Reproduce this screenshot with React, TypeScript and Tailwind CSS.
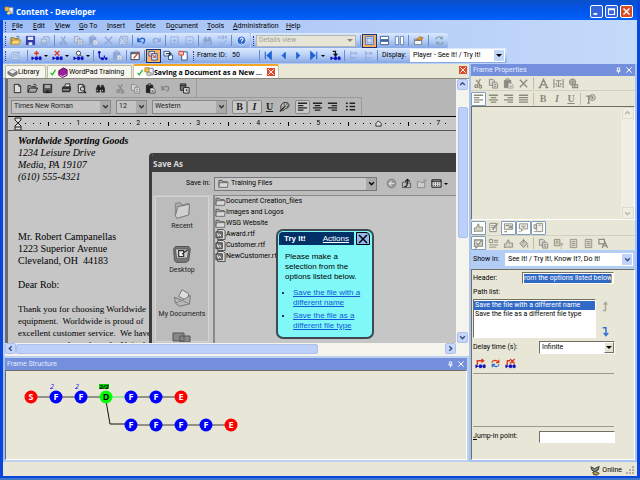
import type { ReactNode } from "react";
import clsx from "clsx";

const doc = (
  <path d="M2.5 1.5h5l2 2v7h-7z M7.5 1.5v2h2" fill="#ddd" stroke="currentColor" />
);
const nodes = (
  <>
    <path d="M1 9h10" stroke="#1212c0" />
    <path d="M1 7.5l2 1.500-2 1.500z M5 7.500h2v3H5z M9 7.500h2v3H9z" fill="#1212c0" stroke="#1212c0" />
  </>
);

// 12x12 toolbar glyphs
const glyphs: Record<string, ReactNode> = {
  open: (
    <>
      <path d="M1 10V3h3l1 1h4v2" fill="#e8b64c" stroke="#8c6a1c" />
      <path d="M1 10l2-4.500h8.500L9.500 10z" fill="#ffd978" stroke="#b5892c" />
      <path d="M7 2c2-1.500 3 0 3 1.500" stroke="#2855b8" />
    </>
  ),
  openMono: (
    <>
      <path d="M1 10V3h3l1 1h4v2 M1 10l2-4.500h8.500L9.500 10z" fill="#aaa" stroke="#222" />
      <path d="M7 2c2-1.500 3 0 3 1.500" stroke="#222" />
    </>
  ),
  save: (
    <>
      <path d="M1.500 1.500h9v9h-9z" fill="currentColor" stroke="currentColor" />
      <path d="M3 2h6v3.500H3z M4 8h4v3H4z" fill="#dfe6f5" />
    </>
  ),
  saveMono: (
    <>
      <path d="M1.500 1.500h9v9h-9z" fill="#555" stroke="#222" />
      <path d="M3 2h6v3.500H3z" fill="#aaa" />
      <path d="M4 8h4v3H4z" fill="#222" />
    </>
  ),
  saveAll: <path d="M1.500 4.500h6v6h-6z M4 4V2h6v6H8 M3 8h3v2H3z" fill="#c9d6ee" stroke="currentColor" />,
  cut: (
    <>
      <path d="M8 1L5 7.500 M3.500 2L8 8" stroke="currentColor" strokeWidth="1.300" />
      <circle cx="3.500" cy="9" r="1.500" stroke="currentColor" strokeWidth="1.300" />
      <circle cx="8" cy="9.500" r="1.500" stroke="currentColor" strokeWidth="1.300" />
    </>
  ),
  copy: (
    <>
      <path d="M1.500 1.500h4l1.500 1.500v5H1.500z" fill="#d8d8d8" stroke="currentColor" />
      <path d="M5 4.500h4l1.500 1.500v5H5z M6.500 7h2.500 M6.500 9h2.500" fill="#d8d8d8" stroke="currentColor" />
    </>
  ),
  paste: (
    <>
      <path d="M1.500 2.500h7v8h-7z" fill="currentColor" stroke="currentColor" />
      <path d="M3.500 1h3v2h-3z" fill="#ddd" stroke="currentColor" />
      <path d="M5.500 5.500h3.500l2 2v3.500h-5.500z M7 8h2 M7 9.500h3" fill="#e8e8e8" stroke="currentColor" strokeWidth=".7" />
    </>
  ),
  x: <path d="M2 2l8 8 M10 2L2 10" stroke="currentColor" strokeWidth="1.500" />,
  snapshot: (
    <>
      <path d="M1.500 3.500h7v7h-7z M3 3V1.500h7.500v7H9" fill="#d5e0f4" stroke="currentColor" />
      <circle cx="5" cy="7" r="2" stroke="currentColor" />
    </>
  ),
  undo: <path d="M2 3v4h4 M2.500 6.500C5 2.500 9.500 3 9.500 6c0 1.500-1 2.500-2.500 3" stroke="currentColor" strokeWidth="1.600" />,
  redo: <path d="M10 3v4H6 M9.500 6.500C7 2.500 2.500 3 2.500 6c0 1.500 1 2.500 2.500 3" stroke="currentColor" strokeWidth="1.400" />,
  expand: <path d="M2 2h8v8H2z M4 6h4 M6 4v4" stroke="currentColor" strokeWidth=".8" />,
  collapse: <path d="M2 2h8v8H2z M4 6h4" stroke="currentColor" strokeWidth=".8" />,
  find: (
    <>
      <path d="M1.500 10V6l1.500-3.500h2V10z M10.500 10V6L9 2.500H7V10z M5 5h2v2H5z" fill="currentColor" stroke="currentColor" strokeWidth=".6" />
      <path d="M2.500 7.500v1.500 M8.200 7.500v1.500" stroke="#eee" strokeWidth=".8" />
    </>
  ),
  spell: <path d="M1 4l1.500-3L4 4 M5.500 1v3h1.500l.5-1-.5-2z M11 1.500H9v2h2 M2 7.500L5 10.500 10.500 5.500" stroke="currentColor" />,
  help: (
    <>
      <circle cx="6" cy="6" r="4.800" fill="#2c68d0" stroke="#e6efff" />
      <path d="M4.500 4.800C4.500 2.600 8 3 7.600 5 7.400 6 6 6 6 7.200 M6 8.400v1" stroke="#fff" strokeWidth="1.200" />
    </>
  ),
  viewSingle: (
    <>
      <path d="M1.500 1.500h9v9h-9z" fill="#fff" stroke="#4268ad" />
      <path d="M3 3h6v6H3z M1.500 4h9 M4 1.500v9 M8 1.500v9 M1.500 8h9" fill="#d7e4fb" stroke="#83a3d9" strokeWidth=".7" />
    </>
  ),
  viewRows: <path d="M1.500 1.500h9v3.500h-9z M1.500 7h9v3.500h-9z M1 6h10" fill="#fff" stroke="#3c5c96" />,
  viewCols: <path d="M1.500 1.500H5v9H1.500z M7 1.500h3.500v9H7z" fill="#fff" stroke="#647fae" />,
  options: (
    <>
      <path d="M1.500 4.500h8v6h-8z M1.500 6h8" fill="#f7f7f0" stroke="#6c7890" />
      <path d="M4 5l3-3 4 1-3 3z" fill="#e79b2e" stroke="#9b5b10" strokeWidth=".7" />
    </>
  ),
  refresh: <path d="M2 5c0-3 5-4 7-1.500V1.500 M9 4H6.500 M10 7c0 3-5 4-7 1.500v2 M3 8h2.500" stroke="currentColor" strokeWidth="1.300" />,
  at: (
    <>
      <circle cx="5.500" cy="6.500" r="4.300" fill="#cfdaef" stroke="currentColor" />
      <path d="M4 5h3v3H4z M8 2l3 1" stroke="currentColor" />
    </>
  ),
  nodeAdd: (
    <>
      <path d="M6 1v5 M3.500 3.500h5" stroke="#e03820" strokeWidth="1.700" />
      {nodes}
    </>
  ),
  nodeDelete: (
    <>
      <path d="M3 1l5 5 M8 1L3 6" stroke="#e03820" strokeWidth="1.400" />
      {nodes}
    </>
  ),
  nodeFind: (
    <>
      <circle cx="6" cy="3.500" r="2.300" fill="#fff" stroke="#333" />
      <path d="M7.500 5l2 2" stroke="#333" />
      {nodes}
    </>
  ),
  nodeLink: (
    <>
      <path d="M2.500 3v4c0 2 2 2.500 4 2 M8 6v3" stroke="#1212c0" strokeWidth="1.300" />
      <circle cx="2.500" cy="2.500" r="1.500" fill="#1212c0" />
      <circle cx="6" cy="9.500" r="1.700" fill="#1212c0" />
      <circle cx="10" cy="9.500" r="1.500" fill="#1212c0" />
    </>
  ),
  nodeJump: (
    <>
      <path d="M3 1.500h3v4 M4 4l2 2.500L8 4" stroke="#111" strokeWidth="1.300" />
      {nodes}
    </>
  ),
  edit: (
    <>
      <path d="M1 2.500h9v8H1z M1 4h9" fill="#fff" stroke="#27374f" />
      <path d="M4 9l6-7" stroke="#c4571a" strokeWidth="1.500" />
    </>
  ),
  frameA: (
    <>
      <path d="M1 1.500h6v5H1z" fill="#fff" stroke="#274b93" />
      <path d="M4 4h6v7H4z" fill="#d8e6ff" stroke="#274b93" />
      <path d="M2 3l6 5 M8 5.500V8H5.500" stroke="#d8402a" />
    </>
  ),
  frameB: (
    <>
      <path d="M1 1.500h6v5H1z M6 5.500h4.500v5H6z" fill="#fff" stroke="#274b93" />
      <path d="M3 4h5 M7 2.500L9 4 7 5.500" stroke="#111" />
    </>
  ),
  frameC: (
    <>
      <path d="M4 2h6v9H4z" fill="#fff" stroke="#274b93" />
      <path d="M1 1.500h5v4H1z" fill="#f6c8bc" stroke="#d8402a" />
    </>
  ),
  first: <path d="M2.500 2v8 M9 2v8L4.500 6z" fill="#1d64d8" stroke="#1d64d8" strokeWidth="1.200" />,
  prev: <path d="M8 2.500v7L4.500 6z" fill="#1d64d8" stroke="#1d64d8" />,
  next: <path d="M4 2.500v7L7.500 6z" fill="#1d64d8" stroke="#1d64d8" />,
  last: <path d="M9.500 2v8 M3 2v8L7.500 6z" fill="#1d64d8" stroke="#1d64d8" strokeWidth="1.200" />,
  tree: <path d="M3 1v10 M3 3.500h6 M3 8.500h6 M8 2l2 1.500L8 5" stroke="currentColor" />,
  new: doc,
  print: (
    <>
      <path d="M4 4l1-3h5L9 4" fill="#eee" stroke="#222" />
      <path d="M1 5l1.500-1.500H11v4L9.500 10H1z" fill="#333" />
      <path d="M2 7.500h7" stroke="#ccc" />
    </>
  ),
  preview: (
    <>
      {doc}
      <circle cx="7" cy="6.500" r="2.300" fill="#ccc" stroke="#222" />
      <path d="M8.500 8.500L11 11" stroke="#222" strokeWidth="1.400" />
    </>
  ),
  date: (
    <>
      <path d="M1.500 1h6v7h-6z M1.500 3h6" fill="#777" stroke="#222" />
      <path d="M5 5h6v6H5z" fill="#ddd" stroke="#222" />
      <path d="M8 6.500v2h1.500" stroke="#222" />
    </>
  ),
  alignLeft: <path d="M1 2.500h10 M1 5h6 M1 7.500h10 M1 10h6" stroke="currentColor" strokeWidth="1.500" />,
  alignCenter: <path d="M1 2.500h10 M3 5h6 M1 7.500h10 M3 10h6" stroke="currentColor" strokeWidth="1.500" />,
  alignRight: <path d="M1 2.500h10 M5 5h6 M1 7.500h10 M5 10h6" stroke="currentColor" strokeWidth="1.500" />,
  justify: <path d="M1 2.500h10 M1 5h10 M1 7.500h10 M1 10h10" stroke="currentColor" strokeWidth="1.500" />,
  bullets: <path d="M1 2.500h2 M5 2.500h6 M1 6h2 M5 6h6 M1 9.500h2 M5 9.500h6" stroke="currentColor" strokeWidth="1.600" />,
  palette: (
    <>
      <path d="M4 10.500C0 9 2 1.500 7 1.500c5 0 5 6 1 6.500-2 0-1 1.500-4 2.500z" fill="#bbb" stroke="currentColor" />
      <path d="M1 11.500L7 5 M5 3.500h1 M8 3.500h1 M8.500 6h1" stroke="currentColor" strokeWidth="1.400" />
    </>
  ),
  back: (
    <>
      <circle cx="6" cy="6" r="4.800" fill="#999" stroke="#777" strokeWidth=".8" />
      <path d="M9 6H4 M6 3.500L3.500 6 6 8.500" stroke="#ddd" strokeWidth="1.300" />
    </>
  ),
  up: (
    <>
      <path d="M1.500 10.500v-6h3l1 1h5v5z" fill="#bbb" stroke="#555" />
      <path d="M3.500 9.500c3 0 3.500-1 3.500-7 M4.500 4L7 1.500 9.500 4" stroke="#222" strokeWidth="1.400" />
    </>
  ),
  newFolder: (
    <>
      <path d="M1.500 10.500V4h3l1 1h4v5.500z" fill="#ccc" stroke="#888" />
      <path d="M9.500 1v4 M7.500 3h4 M8 1.500l3 3 M11 1.500l-3 3" stroke="#999" strokeWidth=".8" />
    </>
  ),
  folder: (
    <>
      <path d="M1 10V2.500h3.500L5.500 4H10v1.500" fill="#a5a5a5" stroke="#444" strokeWidth=".8" />
      <path d="M1 10.200l.5-5 9.500-.2-.6 5.200z" fill="#d8d8d8" stroke="#555" strokeWidth=".8" />
    </>
  ),
  bigFolder: (
    <>
      <path d="M2 9.500V2l3-.5 1 1.500 4-1v6.500z" fill="#aaa" stroke="#888" strokeWidth=".6" />
      <path d="M2 9.500L3.500 4l7-1.500L10 9l-7 2z" fill="#d0d0d0" stroke="#777" strokeWidth=".6" />
    </>
  ),
  desktop: (
    <>
      <path d="M1 3l1-1.500h8L11 3l-1 7-1.500 1h-6L1.500 10z" fill="#777" stroke="#555" strokeWidth=".6" />
      <path d="M2 3h8l-.8 5.500H2.800z" fill="#ccc" stroke="#555" strokeWidth=".5" />
      <path d="M4 4h3v3.500H4z M6 6l3.500-2.500" fill="#eee" stroke="#333" strokeWidth=".7" />
    </>
  ),
  documents: (
    <>
      <path d="M4 5L6 1l4 2.500L9.500 8z" fill="#ddd" stroke="#777" strokeWidth=".6" />
      <path d="M1.500 5.500L6 7.500l5-3-.5 5-6 1.500-2.500-2z" fill="#b8b8b8" stroke="#777" strokeWidth=".6" />
      <path d="M2 9l4-1.500 4.500 2" stroke="#888" strokeWidth=".6" />
    </>
  ),
  views: <path d="M1 2h10v8H1z M1 3.500h10 M3 5.500h1 M5.500 5.500h1 M8 5.500h1 M3 8h1 M5.500 8h1 M8 8h1" fill="#ddd" stroke="currentColor" />,
  rtf: (
    <>
      <path d="M3 .5h6l2 2v9H3z" fill="#ddd" stroke="#444" />
      <path d="M1 3h7v6.500H1z" fill="#777" stroke="#444" />
      <path d="M2.500 4.500l1 3.500 1.500-2.500L6.500 8" stroke="#eee" />
    </>
  ),
  text: (
    <path d="M2 10.500L6 1.500l4 9 M3.500 7.500h5 M.5 10.500h3 M8 10.500h3.500" stroke="currentColor" strokeWidth="1.500" />
  ),
  spacing: <path d="M1 1v10 M11 1v10 M3 3h6 M6 3v6 M3 9h6 M3.500 5.500v2 M8.500 5.500v2" stroke="currentColor" strokeWidth="1.200" />,
  link: (
    <>
      <circle cx="5" cy="4.500" r="3.500" fill="#b5b3a5" stroke="currentColor" />
      <path d="M2 4.500h6 M5 1v7" stroke="#8c8a7c" strokeWidth=".6" />
      <path d="M5 7.500h5.500v3H5z M7.500 8v2" fill="#ddd" stroke="currentColor" strokeWidth="1.200" />
    </>
  ),
  textObj: (
    <>
      <circle cx="8" cy="5" r="3.300" fill="#d2d0c2" stroke="currentColor" />
      <path d="M1 3.500h6 M4 3.500V11 M2.500 11h3 M7 5h2 M8 3.500v3" stroke="currentColor" strokeWidth="1.400" />
    </>
  ),
  hand: <path d="M1.500 10.500v-4h2l2-4.500 1 .5v3h4v4.500h-7z" fill="#d6d3c2" stroke="currentColor" />,
  note: (
    <>
      <path d="M2 1.500h7v9H2z M3.500 4h4 M3.500 6h3" fill="#eee" stroke="currentColor" />
      <path d="M5 8.500l5.500-7" stroke="currentColor" strokeWidth="1.600" />
    </>
  ),
  picture: (
    <>
      <path d="M1.500 2h9v6h-9z" fill="#eee" stroke="currentColor" />
      <path d="M3 4h4 M6.500 7l2-2.500L10 7 M1.500 10.500h3" stroke="currentColor" strokeWidth="1.400" />
    </>
  ),
  callout: (
    <>
      <path d="M1.500 2h9v5.500H6L4 10V7.500H1.500z" fill="#eee" stroke="currentColor" />
      <path d="M3.500 4.500h5 M5 6h2 M1 10.500h2" stroke="currentColor" />
    </>
  ),
  sheet: <path d="M3.500 1.500h7v9h-7z M1 3h3v4H1z M6 3.500h3 M1 10.500h2" fill="#eee" stroke="currentColor" />,
  checkNote: <path d="M1.500 2h9v7h-5L3 11V9H1.500z M3.500 5l2 2.500L9.500 2" fill="#ccc" stroke="currentColor" strokeWidth="1.200" />,
  outline: <path d="M1.500 1.500H5V5H1.500z M6.500 2.500H11 M6.500 4.500H11 M1.500 7.500H11 M1.500 10H9" stroke="currentColor" />,
  bucket: <path d="M2 6l4-4 4.500 4L6 10.500z M6 5V1 M10.500 7.500v3" fill="#c8c5b4" stroke="currentColor" />,
  page: <path d="M2.500 1.500h7v9h-7z M4 4h4 M4 6h4 M4 8h4" fill="#ddd9c8" stroke="currentColor" strokeWidth=".9" />,
  pageQuery: <path d="M1.500 1.500h6v7h-6z M3 3.500h3 M3 5.500h3 M8 7c0-1.500 3-1.500 2.500 0L9 8.500v.8 M9 10.500v1" fill="#ddd9c8" stroke="currentColor" />,
  pageText: <path d="M1 1.500h6v5H1z M4.500 11l3-7 3 7 M5.500 8.500h4" stroke="currentColor" strokeWidth="1.300" />,
  moveUp: <path d="M3 10.500h3V2 M4 4l2-2.500L8 4" stroke="#a8a698" strokeWidth="1.600" />,
  moveDown: <path d="M3 2h3.500v7.500 M4 7.500l2.500 3 2.500-3" stroke="#2f6fd8" strokeWidth="1.600" />,
  pathAdd: (
    <>
      <path d="M2.500 8V3h6 M7 1l2.500 2L7 5" stroke="#e03820" strokeWidth="1.500" />
      {nodes}
    </>
  ),
  pathSwap: (
    <>
      <path d="M2 5c1-3 5-3 7-.500 M9.500 2v3h-3" stroke="#e03820" strokeWidth="1.400" />
      <path d="M10 7c-1 3-5 3-7 .500 M2.500 10V7h3" stroke="#2f6fd8" strokeWidth="1.400" />
    </>
  ),
  pathDelete: (
    <>
      <path d="M2.500 8V3h3 M5.500 1l5 5 M10.500 1l-5 5" stroke="#e03820" strokeWidth="1.500" />
      {nodes}
    </>
  ),
  app: (
    <>
      <path d="M4 1.500h7v8H4z" fill="#e9f0fb" stroke="#52709e" />
      <path d="M1 1h5v5H1z" fill="#f3c14e" stroke="#8a6014" strokeWidth=".7" />
      <path d="M5 6l4 1-3 4-3-2z" fill="#f7dd8a" stroke="#52709e" strokeWidth=".7" />
    </>
  ),
  check: <path d="M1 6.500L4 10l5.500-8.500" stroke="#12b312" strokeWidth="2" />,
  library: (
    <>
      <path d="M1 5l5-2.500L11 5 6 8z" fill="#eee" stroke="#777" strokeWidth=".8" />
      <path d="M1 5v2.500L6 10.500 11 8V5L6 8z" fill="#888" stroke="#666" strokeWidth=".8" />
    </>
  ),
  book: (
    <>
      <path d="M2 4l5-3 4 2v6l-5 2.500L2 9z" fill="#a01c9c" stroke="#4a0a52" />
      <path d="M3 9l3 1.500L10.500 8" stroke="#f1d7f0" />
    </>
  ),
  pin: <path d="M4 1.500h4v5H4z M2.500 7h7 M6 7v4" stroke="currentColor" strokeWidth="1.500" />,
  online: (
    <>
      <path d="M1 2l4 2 5-2.500-1 4-4 2-3-2z" fill="#888" stroke="#333" />
      <path d="M3 8l3-1 4 2-2 2-4-.500z" fill="#c7a23a" stroke="#333" />
    </>
  ),
};

function Glyph({ name, className = "size-[11px]" }: { name: string; className?: string }) {
  return (
    <svg viewBox="0 0 12 12" fill="none" aria-hidden="true" className={clsx("shrink-0", className)}>
      {glyphs[name]}
    </svg>
  );
}

type ToolProps = { icon: string; label: string; off?: boolean; className?: string };

function Tool({ icon, label, off, className }: ToolProps) {
  return (
    <button
      type="button"
      aria-label={label}
      className={clsx("flex h-[14px] w-[15px] shrink-0 items-center justify-center", off && "text-[#8ea6d4]", className)}
    >
      <Glyph name={icon} />
    </button>
  );
}

const Sep = () => <span className="mx-px h-[11px] w-px shrink-0 bg-[#6a8ccb]" />;
const GraySep = () => <span className="mx-[2px] h-[12px] w-px shrink-0 bg-[#c0bead]" />;
const Grip = () => <span className="mx-[2px] h-[10px] shrink-0 border-l border-dotted border-[#27418c]" />;
const Caret = () => <span className="mr-[2px] shrink-0 border-x-2 border-t-2 border-x-transparent border-t-black" />;

function Chevron({ dir, className }: { dir: "up" | "down" | "left" | "right"; className?: string }) {
  const paths = { up: "M2 7l4-4 4 4", down: "M2 4l4 4 4-4", left: "M8 2L4 6l4 4", right: "M4 2l4 4-4 4" };
  return (
    <svg viewBox="0 0 12 12" fill="none" aria-hidden="true" className={clsx("size-[7px]", className)}>
      <path d={paths[dir]} stroke="currentColor" strokeWidth="2.500" />
    </svg>
  );
}

function ScrollButton({ dir }: { dir: "up" | "down" | "left" | "right" }) {
  return (
    <button
      type="button"
      aria-label={`Scroll ${dir}`}
      className="flex size-[11px] shrink-0 items-center justify-center rounded-[2px] border border-[#aebfea] bg-[#c5d5fc] text-[#3a4f80]"
    >
      <Chevron dir={dir} />
    </button>
  );
}

type ComboProps = { label: string; value: string; className?: string; arrow?: string; solid?: boolean };

function Combo({ label, value, className, arrow = "bg-[#c1d3fb] text-[#3a4f80]", solid }: ComboProps) {
  return (
    <span className={clsx("relative flex shrink-0 items-center border", className)}>
      <select aria-label={label} className="h-full w-full appearance-none bg-transparent pl-[2px] outline-none">
        <option>{value}</option>
      </select>
      <span className={clsx("pointer-events-none absolute inset-y-0 right-0 flex w-[10px] items-center justify-center", arrow)}>
        {solid ? (
          <span className="border-x-[3px] border-t-[3px] border-x-transparent border-t-current" />
        ) : (
          <Chevron dir="down" />
        )}
      </span>
    </span>
  );
}

function PaneTitle({ title }: { title: string }) {
  return (
    <div className="flex h-[12px] shrink-0 items-center gap-[3px] bg-[#7490dc] px-[2px] text-[#e4ecff]">
      <h2 className="flex-1">{title}</h2>
      <button type="button" aria-label="Pin pane" className="text-white"><Glyph name="pin" className="size-[7px]" /></button>
      <button type="button" aria-label="Close pane" className="text-white"><Glyph name="x" className="size-[8px]" /></button>
    </div>
  );
}

const bar = "flex h-[15px] items-center rounded-r-[2px] bg-linear-to-b from-[#dce9fe] via-[#b7cff7] to-[#86a7e4]";
const activeTool = "border border-[#1c2f7c] bg-[#fdb35c]";

function TitleBar() {
  const btn = "flex size-[13px] items-center justify-center rounded-[2px] border border-white text-white";
  return (
    <header className="flex h-[20px] shrink-0 items-center gap-[2px] bg-linear-to-b from-[#0a50c8] via-[#0055ea] to-[#0461f8] px-1 pt-[2px] font-['Open_Sans',sans-serif]">
      <Glyph name="app" className="size-[10px]" />
      <h1 className="flex-1 text-[8px] font-bold text-white">Content - Developer</h1>
      <button type="button" aria-label="Minimize" className={clsx(btn, "bg-[#3465dc]")}>
        <svg viewBox="0 0 12 12" className="size-[9px]"><path d="M2 8h5v2.500H2z" fill="#fff" /></svg>
      </button>
      <button type="button" aria-label="Maximize" className={clsx(btn, "bg-[#3465dc]")}>
        <svg viewBox="0 0 12 12" fill="none" className="size-[9px]"><path d="M2 2.500h8v7.500H2z M2 3.500h8" stroke="#fff" strokeWidth="1.500" /></svg>
      </button>
      <button type="button" aria-label="Close" className={clsx(btn, "bg-[#dc4a22]")}>
        <svg viewBox="0 0 12 12" className="size-[9px]"><path d="M2 2l8 8 M10 2L2 10" stroke="#fff" strokeWidth="2" /></svg>
      </button>
    </header>
  );
}

const menus = [
  ["", "F", "ile", "w-[21px]"],
  ["", "E", "dit", "w-[22px]"],
  ["", "V", "iew", "w-[24px]"],
  ["", "G", "o To", "w-[28px]"],
  ["", "I", "nsert", "w-[29px]"],
  ["", "D", "elete", "w-[30px]"],
  ["D", "o", "cument", "w-[41px]"],
  ["", "T", "ools", "w-[26px]"],
  ["", "A", "dministration", "w-[53px]"],
  ["", "H", "elp", "w-[20px]"],
];

function MainBars() {
  return (
    <div className="shrink-0 bg-linear-to-r from-[#9ebef5] via-[#b3cbf6] to-[#c4dafa]">
      <nav className="flex h-[13px] items-center">
        <Grip />
        <span className="w-[4px]" />
        {menus.map(([pre, key, rest, w]) => (
          <button key={key + rest} type="button" className={clsx("text-left whitespace-nowrap", w)}>
            {pre}<u>{key}</u>{rest}
          </button>
        ))}
      </nav>
      <div className="flex gap-px">
        <div className={bar}>
          <Grip />
          <Tool icon="open" label="Open" />
          <Tool icon="save" label="Save" className="text-[#3138a8]" />
          <Tool icon="saveAll" label="Save All" off />
          <Sep />
          <Tool icon="cut" label="Cut" off />
          <Tool icon="copy" label="Copy" off />
          <Tool icon="paste" label="Paste" off />
          <Tool icon="x" label="Delete" off />
          <Tool icon="snapshot" label="Capture" off />
          <Sep />
          <Tool icon="undo" label="Undo" className="text-[#2468d6]" />
          <Tool icon="redo" label="Redo" off />
          <Sep />
          <Tool icon="expand" label="Expand" off className="w-[13px]" />
          <Tool icon="collapse" label="Collapse" off className="w-[13px]" />
          <Sep />
          <Tool icon="find" label="Find" off />
          <Tool icon="spell" label="Spelling" off />
          <Sep />
          <Tool icon="help" label="Help" className="w-[17px]" />
        </div>
        <div className={bar}>
          <Grip />
          <Combo label="View" value="Details view" className="h-[12px] w-[100px] border-[#b5b8b8] bg-[#e6e5d8] text-[#a3a294]" arrow="text-[#8a897c]" solid />
          <span className="w-[3px]" />
          <Sep />
          <Tool icon="viewSingle" label="Single view" className={activeTool} />
          <Tool icon="viewRows" label="Split rows" />
          <Tool icon="viewCols" label="Split columns" />
          <Sep />
          <Tool icon="options" label="Options" className="w-[17px]" />
          <Sep />
          <Tool icon="refresh" label="Refresh" className="w-[18px] text-[#7ea6a8]" />
        </div>
      </div>
      <div className="flex pb-px">
        <div className={bar}>
          <Grip />
          <Tool icon="at" label="Preview" off />
          <span className="w-[3px]" />
          <Sep />
          <Tool icon="nodeAdd" label="Insert frame" className="w-[14px]" />
          <Caret />
          <Tool icon="nodeDelete" label="Delete frame" />
          <Caret />
          <Tool icon="nodeFind" label="Find frame" />
          <Caret />
          <Sep />
          <Tool icon="nodeLink" label="Link frames" />
          <Tool icon="paste" label="Paste frame" off />
          <Sep />
          <Tool icon="edit" label="Edit frame" />
          <Sep />
          <Tool icon="frameA" label="Show current frame" className={activeTool} />
          <Tool icon="frameB" label="Next path" />
          <Tool icon="frameC" label="Frame links" />
        </div>
        <div className={bar}>
          <Grip />
          <span className="w-[36px] pl-px">Frame ID:</span>
          <span className="w-[26px]">50</span>
          <Sep />
          <Tool icon="first" label="First frame" />
          <Tool icon="prev" label="Previous frame" />
          <Tool icon="next" label="Next frame" />
          <Tool icon="last" label="Last frame" />
          <Caret />
          <Tool icon="nodeJump" label="Jump to frame" className="w-[16px]" />
          <Sep />
          <Tool icon="tree" label="Previous branch" off />
          <Tool icon="tree" label="Next branch" off />
          <Sep />
          <span className="w-[31px] pl-[3px]">Display:</span>
          <Combo label="Display" value="Player - See It! / Try It!" className="mr-[2px] h-[13px] w-[95px] border-white bg-white" arrow="bg-[#c1d6f8] text-black" solid />
        </div>
      </div>
    </div>
  );
}

function Tabs() {
  return (
    <div role="tablist" className="flex h-[14px] shrink-0 items-end bg-[#e9e7d6] pl-[2px]">
      <button type="button" role="tab" className="flex h-[13px] w-[41px] items-center rounded-t-[2px] border border-b-0 border-[#bbb9a8] bg-[#f7f6ee] pl-px">
        <Glyph name="library" />Library
      </button>
      <button type="button" role="tab" className="ml-px flex h-[13px] w-[85px] items-center rounded-t-[2px] border border-b-0 border-[#bbb9a8] bg-[#f7f6ee] pl-[2px]">
        <Glyph name="check" className="size-[7px]" />
        <Glyph name="book" />
        <span className="pl-px">WordPad Training</span>
      </button>
      <div className="ml-px flex h-full w-[146px] items-center rounded-t-[2px] border border-t-2 border-b-0 border-[#c7c5b4] border-t-[#f5a524] bg-white pl-[3px]">
        <button type="button" role="tab" aria-selected="true" className="flex flex-1 items-center font-['Open_Sans',sans-serif] font-bold whitespace-nowrap">
          <Glyph name="check" className="size-[7px]" />
          <Glyph name="app" className="size-[10px]" />Saving a Document as a New ...
        </button>
        <button type="button" aria-label="Close tab" className="mr-[3px] bg-[#de4a2a] text-white"><Glyph name="x" className="size-[8px]" /></button>
      </div>
      <span className="flex-1" />
      <button type="button" aria-label="Close document" className="mr-[2px] mb-[4px] bg-[#de4a2a] text-white"><Glyph name="x" className="size-[8px]" /></button>
    </div>
  );
}

function Ruler() {
  return (
    <div className="flex h-[15px] items-center overflow-hidden border-y border-t-black border-b-[#555] bg-[#c8c8c8] pl-[6px]">
      <svg viewBox="0 0 8 14" fill="#ddd" stroke="#222" className="h-[14px] w-[8px] shrink-0">
        <path d="M1 1h6v2L4 6 1 3z M4 6l3 3v4H1V9z M1 10h6" />
      </svg>
      {[1, 2, 3, 4, 5, 6, 7].map((n) => (
        <div key={n} className="grid w-[60px] shrink-0 grid-cols-8 place-items-center">
          {[1, 2, 3, 4, 5, 6, 7].map((t) => (
            <span key={t} className={clsx("w-px bg-black", t === 4 ? "h-[4px]" : "h-px")} />
          ))}
          {n === 6 ? (
            <svg viewBox="0 0 8 8" fill="#ddd" stroke="#222" className="size-[7px]"><path d="M4 1l3 3v3H1V4z" /></svg>
          ) : (
            <span>{n}</span>
          )}
        </div>
      ))}
      <span className="ml-[3px] h-px w-px bg-black" />
    </div>
  );
}

function WordPadBars() {
  const combo = "h-[14px] border-[#888] bg-[#c4c4c4]";
  const arrow = "bg-[#aaa] text-[#333]";
  const pressed = "rounded-[2px] border border-[#888] bg-[#c8c8c8]";
  const letter = "h-[14px] w-[15px] font-['Liberation_Serif',serif] text-[10px] leading-none font-bold";
  return (
    <>
      <div className="flex h-[18px] items-center bg-[#b6b6b6] text-[#222]">
        <div className="flex h-full items-center border-r border-[#999] pr-[4px] pl-[2px]">
          <Tool icon="new" label="New document" />
          <Tool icon="openMono" label="Open document" />
          <Tool icon="saveMono" label="Save document" />
          <Tool icon="print" label="Print" className="ml-[4px]" />
          <Tool icon="preview" label="Print preview" />
          <Tool icon="find" label="Find text" className="ml-[4px]" />
          <Tool icon="cut" label="Cut text" className="ml-[5px] text-[#888]" />
          <Tool icon="copy" label="Copy text" className="text-[#888]" />
          <Tool icon="paste" label="Paste text" />
          <Tool icon="undo" label="Undo typing" className="text-[#888]" />
          <Tool icon="date" label="Date and time" className="ml-[4px]" />
        </div>
      </div>
      <div className="flex h-[18px] bg-[#b6b6b6] text-[#222]">
        <div className="flex h-full items-center border-t border-r border-[#999] pr-[3px] pl-[3px]">
          <Combo label="Font" value="Times New Roman" className={clsx(combo, "w-[100px]")} arrow={arrow} />
          <Combo label="Font size" value="12" className={clsx(combo, "mx-[5px] w-[31px]")} arrow={arrow} />
          <Combo label="Script" value="Western" className={clsx(combo, "mr-[5px] w-[75px]")} arrow={arrow} />
          <button type="button" className={clsx(pressed, letter)}>B</button>
          <button type="button" className={clsx(pressed, letter, "italic")}>I</button>
          <button type="button" className={clsx(letter, "underline")}>U</button>
          <Tool icon="palette" label="Color" />
          <Tool icon="alignLeft" label="Align left" className={clsx(pressed, "ml-[3px]")} />
          <Tool icon="alignCenter" label="Center" />
          <Tool icon="alignRight" label="Align right" />
          <Tool icon="bullets" label="Bullets" className="ml-[3px]" />
        </div>
      </div>
    </>
  );
}

const places = [
  ["Recent", "bigFolder"],
  ["Desktop", "desktop"],
  ["My Documents", "documents"],
];

const files = [
  ["Document Creation_files", "folder"],
  ["Images and Logos", "folder"],
  ["WSG Website", "folder"],
  ["Award.rtf", "rtf"],
  ["Customer.rtf", "rtf"],
  ["NewCustomer.rtf", "rtf"],
];

function SaveDialog() {
  return (
    <section className="absolute top-[22px] right-0 bottom-0 left-[141px] flex flex-col overflow-hidden rounded-tl-[4px] border-t border-l-[3px] border-[#3c3c3c] bg-[#c6c6c6]">
      <h3 className="flex h-[18px] shrink-0 items-center bg-[#3e3e3e] pl-px font-['Open_Sans',sans-serif] text-[8px] font-bold text-[#ddd]">Save As</h3>
      <div className="flex h-[23px] shrink-0 items-center bg-[#bcbcbc]">
        <span className="w-[62px] pr-[4px] text-right">Save in:</span>
        <span className="flex h-[14px] w-[163px] items-center border border-[#777] bg-[#c8c8c8] pl-[3px]">
          <Glyph name="folder" />
          <select aria-label="Save in" className="flex-1 appearance-none pl-[2px] outline-none">
            <option>Training Files</option>
          </select>
          <span className="flex h-full w-[10px] items-center justify-center bg-[#aaa]"><Chevron dir="down" /></span>
        </span>
        <Tool icon="back" label="Back" className="ml-[7px]" />
        <Tool icon="up" label="Up one level" />
        <Tool icon="newFolder" label="New folder" />
        <Tool icon="views" label="View menu" />
        <Caret />
      </div>
      <div className="flex min-h-0 flex-1 overflow-hidden">
        <div className="my-px mr-[4px] ml-[3px] flex w-[54px] shrink-0 flex-col gap-[13px] border border-[#d4d4d4] bg-[#bcbcbc] pt-[3px] text-[#222]">
          {places.map(([label, icon]) => (
            <button key={label} type="button" className="flex h-[31px] shrink-0 flex-col items-center justify-between whitespace-nowrap">
              <Glyph name={icon} className="size-[20px]" />
              <span>{label}</span>
            </button>
          ))}
          <svg viewBox="0 0 20 10" className="h-[10px] w-[20px] shrink-0 self-center" fill="#888" stroke="#555">
            <path d="M1 1h11v8H1z M8 4h10v6H8z" />
          </svg>
        </div>
        <ul className="flex-1 border-t border-l-2 border-[#888]">
          {files.map(([name, icon]) => (
            <li key={name} className="flex h-[11px] items-center">
              <Glyph name={icon} />{name}
            </li>
          ))}
        </ul>
      </div>
    </section>
  );
}

function Coach() {
  return (
    <aside className="absolute top-[98px] left-[268px] w-[98px] rounded-[7px] border-2 border-[#3b4a52] bg-[#80f8f8] pb-[6px] font-['Liberation_Sans',sans-serif] text-[8px] leading-[10px]">
      <div className="flex h-[14px] gap-[2px] pt-px pr-[2px] pl-px">
        <div className="flex flex-1 items-center justify-between rounded-tl-[4px] bg-[#003068] pr-[5px] pl-[5px] text-white">
          <b>Try It!</b>
          <a href="#actions" className="underline">Actions</a>
        </div>
        <button type="button" aria-label="Close" className="flex w-[14px] items-center justify-center rounded-tr-[4px] border border-black bg-[#94b8f0]">
          <Glyph name="x" className="size-[12px]" />
        </button>
      </div>
      <p className="mt-[7px] ml-[7px]">Please make a<br />selection from the<br />options listed below.</p>
      <ul className="mt-[6px] ml-[15px] flex list-disc flex-col gap-[3px] text-[#1058d8] marker:text-black">
        <li><a href="#name" className="underline">Save the file with a<br />different name</a></li>
        <li><a href="#type" className="underline">Save the file as a<br />different file type</a></li>
      </ul>
    </aside>
  );
}

function DocumentView() {
  return (
    <div className="flex min-h-0 flex-1 flex-col border-t border-l-2 border-t-[#8a8878] border-l-[#b8cdf0] bg-[#f4f3ec]">
      <div className="flex min-h-0 flex-1">
        <div className="flex min-w-0 flex-1 flex-col border-l-3 border-[#6c6c6c] bg-[#c6c6c6]">
          <WordPadBars />
          <div className="bg-[#b6b6b6] pt-px"><Ruler /></div>
          <div className="relative min-h-0 flex-1 overflow-hidden">
            <div className="px-[10px] pt-[4px] font-['Liberation_Serif',serif] text-[10px] leading-[12px] whitespace-pre text-black">
              <address className="pb-[48px]"><b>Worldwide Sporting Goods</b><br />1234 Leisure Drive<br />Media, PA 19107<br />(610) 555-4321</address>
              <p className="pb-[12px]">Mr. Robert Campanellas<br />1223 Superior Avenue<br />Cleveland, OH  44183</p>
              <p className="pb-[12px]">Dear Rob:</p>
              <p className="text-[9px]">Thank you for choosing Worldwide<br />equipment.  Worldwide is proud of<br />excellent customer service.  We have<br />many events throughout the United</p>
            </div>
            <SaveDialog />
            <Coach />
          </div>
        </div>
        <div className="flex w-[13px] shrink-0 flex-col items-center">
          <ScrollButton dir="up" />
          <span className="mt-[17px] h-[131px] w-[10px] rounded-[2px] border border-[#aebfea] bg-[#bdd0fa]" />
          <span className="flex-1" />
          <ScrollButton dir="down" />
        </div>
      </div>
      <div className="flex h-[13px] shrink-0 items-center pr-[13px] pb-[2px]">
        <ScrollButton dir="left" />
        <span className="h-[10px] w-[67%] rounded-[2px] border border-[#aebfea] bg-[#bdd0fa]" />
        <span className="flex-1" />
        <ScrollButton dir="right" />
      </div>
    </div>
  );
}

const frames = [
  { t: "S", x: 25, y: 26, c: "#f00" },
  { t: "F", x: 50, y: 26, c: "#00f" },
  { t: "F", x: 75, y: 26, c: "#00f" },
  { t: "D", x: 100, y: 26, c: "#0f0" },
  { t: "F", x: 125, y: 26, c: "#00f" },
  { t: "F", x: 150, y: 26, c: "#00f" },
  { t: "E", x: 175, y: 26, c: "#f00" },
  { t: "F", x: 125, y: 54, c: "#00f" },
  { t: "F", x: 150, y: 54, c: "#00f" },
  { t: "F", x: 175, y: 54, c: "#00f" },
  { t: "F", x: 200, y: 54, c: "#00f" },
  { t: "E", x: 225, y: 54, c: "#f00" },
];

function FrameStructure() {
  return (
    <section className="flex h-[106px] shrink-0 flex-col border-2 border-[#bcd0f0] border-l-[#9ebdf0]">
      <PaneTitle title="Frame Structure" />
      <div className="flex-1 border border-t-[#6f6e62] border-r-white border-b-white border-l-[#6f6e62] bg-[#e8e7d7]">
        <svg width="300" height="80" className="font-['Open_Sans',sans-serif] font-bold">
          <g fill="none" stroke="#77766c" strokeWidth="1.500">
            <path d="M25 26h75 M125 26h50 M125 54h100" />
            <path d="M100 26h25" stroke="#7ee87e" />
            <path d="M100 30l4 23h20" stroke="#111" strokeWidth="1" />
          </g>
          {frames.map((f, i) => (
            <g key={i}>
              <circle cx={f.x} cy={f.y} r="6.500" fill={f.c} />
              <text x={f.x} y={f.y + 3} textAnchor="middle" fontSize="9" fill={f.t === "D" ? "#000" : "#fff"}>{f.t}</text>
            </g>
          ))}
          <g fontSize="7" fontStyle="italic" fontWeight="400" fill="#00f">
            <text x="44" y="18">2</text>
            <text x="69" y="18">2</text>
          </g>
          <rect x="93" y="13" width="10" height="5" fill="#0c0" />
          <text x="98" y="18" textAnchor="middle" fontSize="6" fontStyle="italic">2/2</text>
        </svg>
      </div>
    </section>
  );
}

function FrameProperties() {
  const row = "flex h-[15px] shrink-0 items-center text-[#8c8a7c]";
  const on = "border border-[#7f9db9] bg-white rounded-[1px]";
  const field = "border border-t-[#716f64] border-r-white border-b-white border-l-[#716f64] bg-white";
  const letter = "w-[14px] font-['Liberation_Serif',serif] text-[10px] leading-none font-bold";
  return (
    <section className="flex w-[168px] shrink-0 flex-col border-2 border-t-0 border-[#a9c4f2] bg-[#e8e7d7]">
      <PaneTitle title="Frame Properties" />
      <div className={clsx(row, "border-b border-[#d2d0be]")}>
        <Tool icon="cut" label="Cut" />
        <Tool icon="copy" label="Copy" />
        <Tool icon="paste" label="Paste" />
        <Tool icon="x" label="Delete" />
        <GraySep />
        <Tool icon="text" label="Font" />
        <Tool icon="spacing" label="Spacing" />
        <Tool icon="link" label="Insert link" />
      </div>
      <div className={row}>
        <Tool icon="alignLeft" label="Align left" className={on} />
        <Tool icon="alignCenter" label="Center" />
        <Tool icon="alignRight" label="Align right" />
        <Tool icon="justify" label="Justify" />
        <GraySep />
        <button type="button" className={letter}>B</button>
        <button type="button" className={clsx(letter, "italic")}>I</button>
        <button type="button" className={clsx(letter, "underline")}>U</button>
        <GraySep />
        <Tool icon="textObj" label="Text object" />
      </div>
      <div className="flex min-h-0 flex-1 border border-t-[#716f64] border-r-white border-b-white border-l-[#716f64]">
        <textarea aria-label="Bubble text" className="flex-1 resize-none bg-transparent outline-none" />
        <div className="flex w-[13px] flex-col items-center justify-between bg-[#efeee4] text-[#b9b7a8]">
          <button type="button" aria-label="Scroll text up" className="flex size-[12px] items-center justify-center border border-[#dddbc9]"><Chevron dir="up" /></button>
          <button type="button" aria-label="Scroll text down" className="flex size-[12px] items-center justify-center border border-[#dddbc9]"><Chevron dir="down" /></button>
        </div>
      </div>
      <div className={row}>
        <Tool icon="hand" label="Action" className={on} />
        <Tool icon="note" label="Note" />
        <Tool icon="picture" label="Screenshot" className={on} />
        <Tool icon="callout" label="Bubble" className={on} />
        <Tool icon="sheet" label="Sheet" className={on} />
      </div>
      <div className={clsx(row, "border-t border-[#d2d0be]")}>
        <Tool icon="checkNote" label="Show bubble" className={on} />
        <Tool icon="outline" label="Outline" />
        <Tool icon="hand" label="Pointer" />
        <Tool icon="bucket" label="Background" />
        <GraySep />
        <Tool icon="copy" label="Copy frame" />
        <Tool icon="pageQuery" label="Question" />
        <Tool icon="page" label="Page" />
        <Tool icon="page" label="Template" />
        <Tool icon="pageText" label="Template text" />
      </div>
      <div className="flex h-[19px] shrink-0 items-center bg-[#b4cdf5] pl-[2px]">
        <span className="w-[32px]">Show in:</span>
        <Combo label="Show in" value="See It! / Try It!, Know It?, Do It!" className="h-[13px] w-[128px] border-white bg-white" />
      </div>
      <form className="h-[191px] shrink-0 border border-t-[#716f64] border-r-white border-b-white border-l-[#716f64] pl-px">
        <div className="flex h-[16px] items-center pr-[20px]">
          <label htmlFor="header" className="w-[49px]">Header:</label>
          <span className={clsx(field, "flex h-[12px] min-w-0 flex-1 items-center pr-px pl-px")}>
            <input id="header" readOnly defaultValue="rom the options listed below." className="h-[9px] w-full min-w-0 border-r border-[#e0953a] bg-[#316ac5] text-white outline-none" />
          </span>
        </div>
        <h3 id="paths" className="flex h-[13px] items-center">Path list:</h3>
        <div className="flex">
          <ul role="listbox" aria-labelledby="paths" className={clsx(field, "h-[39px] w-[123px] pt-px")}>
            <li role="option" aria-selected="true" className="h-[9px] bg-[#316ac5] pl-px leading-[9px] text-white">Save the file with a different name</li>
            <li role="option" aria-selected="false" className="h-[9px] pl-px leading-[9px]">Save the file as a different file type</li>
          </ul>
          <div className="flex flex-col justify-between pl-[2px]">
            <Tool icon="moveUp" label="Move path up" />
            <Tool icon="moveDown" label="Move path down" />
          </div>
        </div>
        <div className="flex h-[19px] items-center">
          <span className="w-[66px]">Delay time (s):</span>
          <Combo label="Delay time" value="Infinite" className={clsx(field, "h-[13px] w-[76px]")} arrow="border border-t-white border-l-white border-r-[#716f64] border-b-[#716f64] bg-[#e6e3d0] text-black" solid />
        </div>
        <div className="mr-[20px] flex h-[17px] items-center border-b border-[#9b998a] pb-[3px]">
          <Tool icon="pathAdd" label="Add path" />
          <Tool icon="pathSwap" label="Change path" />
          <Tool icon="pathDelete" label="Delete path" />
        </div>
        <div className="mr-[20px] h-[53px] border-b border-[#9b998a]" />
        <div className="flex h-[19px] items-center">
          <label htmlFor="jump" className="w-[66px]"><u>J</u>ump-in point:</label>
          <input id="jump" className={clsx(field, "h-[12px] w-[76px] outline-none")} />
        </div>
      </form>
    </section>
  );
}

export default function App() {
  return (
    <div className="flex h-screen w-full flex-col border-b-2 border-[#3d78c8] bg-[#0a46dc] pr-[3px] pb-[2px] font-[Roboto,sans-serif] text-[7px] leading-[9px] text-black">
      <TitleBar />
      <div className="flex min-h-0 flex-1 flex-col pl-[3px]">
        <MainBars />
        <main className="flex min-h-0 flex-1 bg-[#c4d8f6]">
          <div className="flex min-w-0 flex-1 flex-col">
            <Tabs />
            <DocumentView />
            <FrameStructure />
          </div>
          <FrameProperties />
        </main>
        <footer className="flex h-[14px] shrink-0 items-center justify-end gap-px bg-[#e8e7d7] pt-[2px] pr-[3px]">
          <Glyph name="online" />
          <span>Online</span>
          <svg viewBox="0 0 8 8" fill="#b0ae9c" className="ml-[3px] size-[8px]" aria-hidden="true">
            <path d="M6 0h2v2H6z M3 3h2v2H3z M6 3h2v2H6z M0 6h2v2H0z M3 6h2v2H3z M6 6h2v2H6z" />
          </svg>
        </footer>
      </div>
    </div>
  );
}
